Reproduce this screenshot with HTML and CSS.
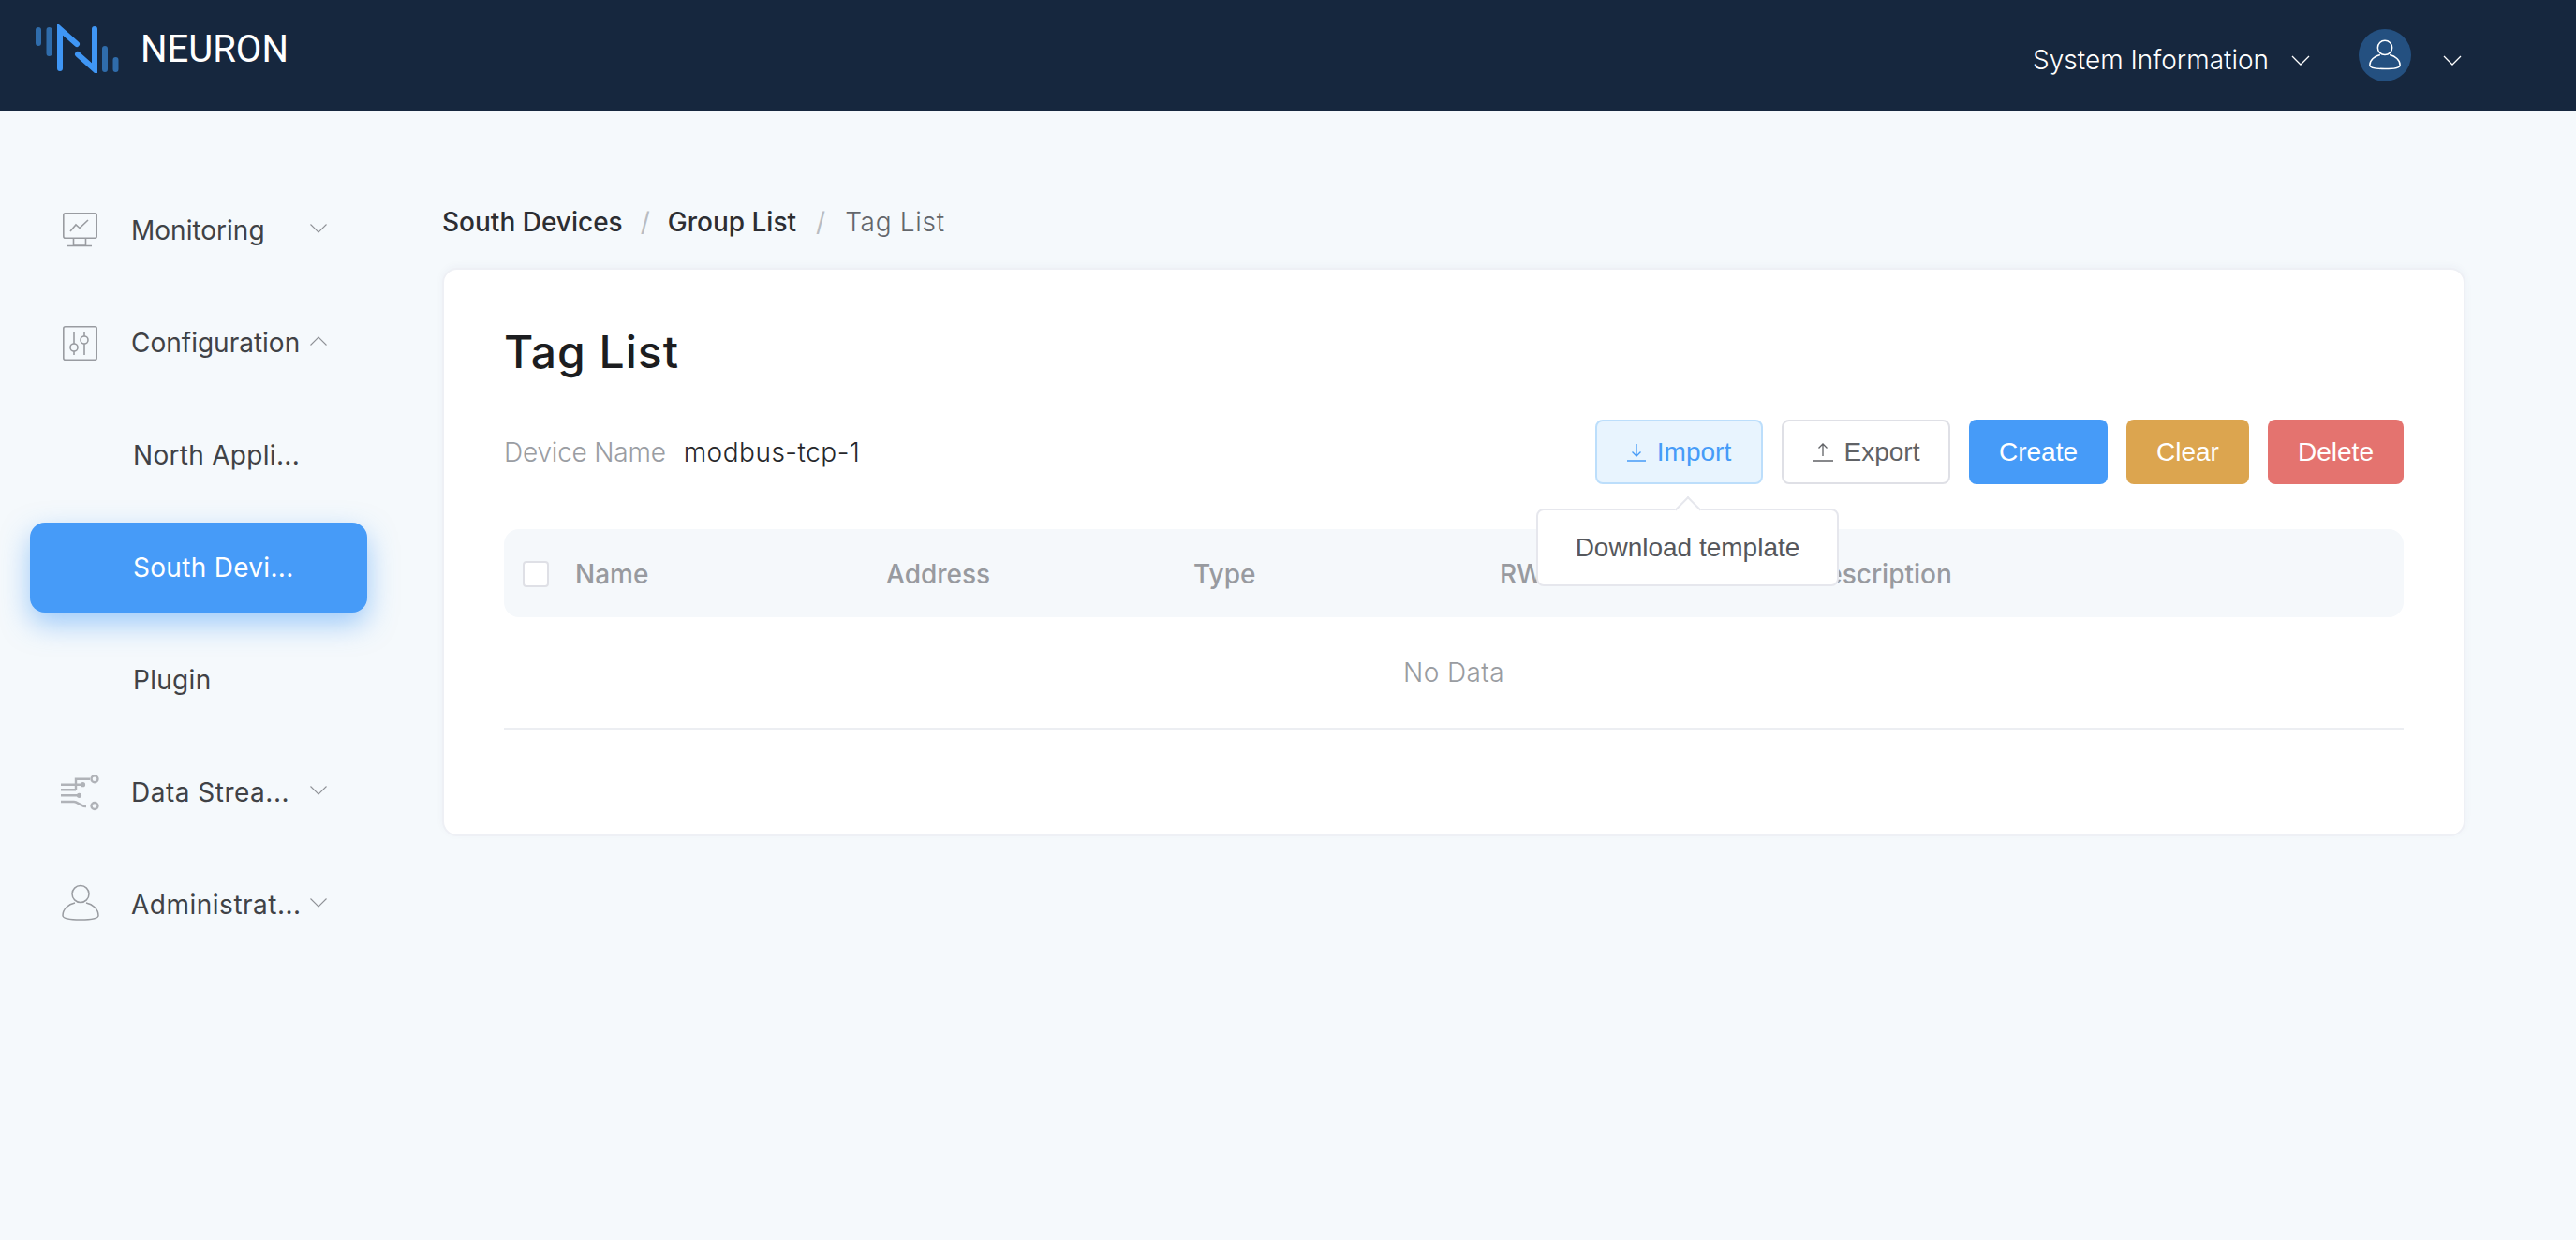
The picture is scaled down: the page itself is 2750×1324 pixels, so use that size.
FILE: index.html
```html
<!DOCTYPE html>
<html>
  <head>
    <meta charset="utf-8">
    <title>Neuron</title>
    <link rel="stylesheet" href="styles.css">
  </head>
  <body>
    <header class="header">
      <div class="brand">
        <svg class="logo" width="92" height="52" viewBox="0 0 92 52" fill="none" stroke-linecap="round">
          <g stroke="#2f6cab" stroke-width="6">
            <path d="M5 6v14M16.5 6v25M76 26v22M87.5 38v10"/>
          </g>
          <g stroke="#3f96f5" stroke-width="6">
            <path d="M28 47V5l18 16M47 32l18 16V5"/>
          </g>
        </svg>
        <span class="brand-name">NEURON</span>
      </div>
      <div class="header-right">
        <span class="sys-info">System Information</span>
        <svg class="chevron-top" width="20" height="11" viewBox="0 0 20 11" fill="none" stroke="#fff" stroke-width="1.3"><path d="M1 1l9 9 9-9"/></svg>
        <div class="avatar">
          <svg width="34" height="36" viewBox="0 0 40 40" fill="none" stroke="#fff" stroke-width="1.8">
            <circle cx="20" cy="10.5" r="9"/>
            <path d="M14 19.5C7 21 1 26 1 32.5c0 3 6 4.5 19 4.5s19-1.5 19-4.5C39 26 33 21 26 19.5"/>
          </svg>
        </div>
        <svg class="chevron-top" width="20" height="11" viewBox="0 0 20 11" fill="none" stroke="#fff" stroke-width="1.3"><path d="M1 1l9 9 9-9"/></svg>
      </div>
    </header>

    <div class="main">
      <nav class="sidebar">
        <div class="menu-item">
          <svg class="menu-icon" width="44" height="44" viewBox="0 0 44 44" fill="none" stroke="#999ca1" stroke-width="1.6">
            <rect x="4.800" y="3.800" width="35.400" height="26.400" rx="2"/>
            <path d="M12 23l6-7 4 3.500 9-8.500M15.500 30v8h13v-8M8 38.500h27"/>
          </svg>
          <span class="menu-text">Monitoring</span>
          <svg class="arrow" width="18" height="10" viewBox="0 0 18 10" fill="none" stroke="#8f9297" stroke-width="1.1"><path d="M.5.500L9 9l8.500-8.500"/></svg>
        </div>
        <div class="menu-item">
          <svg class="menu-icon" width="44" height="44" viewBox="0 0 44 44" fill="none" stroke="#999ca1" stroke-width="1.6">
            <rect x="4.800" y="4.800" width="35.400" height="35.400" rx="2"/>
            <path d="M16 11v12M16 31v4M27 11v4M27 23v12"/>
            <circle cx="16" cy="27" r="4"/>
            <circle cx="27" cy="19" r="4"/>
          </svg>
          <span class="menu-text">Configuration</span>
          <svg class="arrow" width="18" height="10" viewBox="0 0 18 10" fill="none" stroke="#8f9297" stroke-width="1.1"><path d="M.5 9.500L9 1l8.500 8.500"/></svg>
        </div>
        <div class="menu-item sub-item"><span class="menu-text">North Appli...</span></div>
        <div class="menu-item sub-item active"><span class="menu-text">South Devi...</span></div>
        <div class="menu-item sub-item"><span class="menu-text">Plugin</span></div>
        <div class="menu-item">
          <svg class="menu-icon" width="44" height="44" viewBox="0 0 44 44" fill="none" stroke="#b0b3b8" stroke-width="2.400">
            <path d="M33 7.700H18V19M2 13.700h24M2 19.300h16M2 25.300h20M2 32h14c4 0 7 5 13 5"/>
            <circle cx="38" cy="7.700" r="3.500"/>
            <circle cx="38" cy="36.500" r="3.500"/>
            <circle cx="25.500" cy="13.700" r="1.400" fill="#b0b3b8"/>
            <circle cx="21.500" cy="25.300" r="1.400" fill="#b0b3b8"/>
          </svg>
          <span class="menu-text spaced">Data Strea...</span>
          <svg class="arrow" width="18" height="10" viewBox="0 0 18 10" fill="none" stroke="#8f9297" stroke-width="1.1"><path d="M.5.500L9 9l8.500-8.500"/></svg>
        </div>
        <div class="menu-item">
          <svg class="menu-icon" width="44" height="44" viewBox="0 0 44 44" fill="none" stroke="#999ca1" stroke-width="1.500">
            <circle cx="23" cy="10.500" r="9"/>
            <path d="M17 20C10 21.500 4 26.500 4 33.500c0 3 6 4.500 19 4.500s19-1.500 19-4.500c0-7-6-12-13-13.500"/>
          </svg>
          <span class="menu-text spaced">Administrat...</span>
          <svg class="arrow" width="18" height="10" viewBox="0 0 18 10" fill="none" stroke="#8f9297" stroke-width="1.1"><path d="M.5.500L9 9l8.500-8.500"/></svg>
        </div>
      </nav>

      <section class="content">
        <div class="breadcrumb">
          <span class="crumb">South Devices</span>
          <span class="crumb-sep">/</span>
          <span class="crumb">Group List</span>
          <span class="crumb-sep crumb-sep-wide">/</span>
          <span class="crumb crumb-last">Tag List</span>
        </div>

        <div class="card">
          <h1 class="card-title">Tag List</h1>
          <div class="toolbar">
            <div class="device">
              <span class="device-label">Device Name</span>
              <span class="device-value">modbus-tcp-1</span>
            </div>
            <div class="actions">
              <div class="import-wrap">
                <button class="btn btn-import">
                  <svg width="20" height="20" viewBox="0 0 20 20" fill="none" stroke="#469bf8" stroke-width="1.300"><path d="M10 1v13M5.500 9.500L10 14l4.500-4.500M0 19h20"/></svg>
                  Import
                </button>
                <div class="popover">Download template</div>
              </div>
              <button class="btn btn-export">
                <svg width="22" height="20" viewBox="0 0 22 20" fill="none" stroke="#606266" stroke-width="1.300"><path d="M11 14V1M6.500 5.500L11 1l4.500 4.500M0 19h22"/></svg>
                Export
              </button>
              <button class="btn btn-create">Create</button>
              <button class="btn btn-clear">Clear</button>
              <button class="btn btn-delete">Delete</button>
            </div>
          </div>

          <div class="table-head">
            <span class="checkbox"></span>
            <span>Name</span>
            <span>Address</span>
            <span>Type</span>
            <span>RW</span>
            <span>Description</span>
          </div>
          <div class="table-empty">No Data</div>
        </div>
      </section>
    </div>
  </body>
</html>
```

FILE: styles.css
```css
* {
  box-sizing: border-box;
}
html, body {
  margin: 0;
  height: 100%;
}
body {
  background: #f5f9fc;
  font-family: "Inter", "Noto Sans", sans-serif;
  font-size: 28px;
  color: #404246;
}
.header {
  height: 118px;
  background: #16273e;
  display: flex;
  justify-content: space-between;
  align-items: center;
  padding: 0 122px 0 36px;
}
.brand {
  display: flex;
  align-items: flex-start;
  height: 118px;
  padding-top: 26px;
}
.brand-name {
  font-family: "Roboto", sans-serif;
  font-size: 40px;
  line-height: 54px;
  color: #fff;
  margin-left: 22px;
}
.header-right {
  display: flex;
  align-items: center;
  color: #fff;
}
.sys-info {
  font-size: 28px;
  font-weight: 300;
  margin: 10px 24px 0 0;
}
.chevron-top {
  margin-top: 10px;
}
.avatar {
  width: 56px;
  height: 56px;
  border-radius: 50%;
  background: #245080;
  display: flex;
  align-items: center;
  justify-content: center;
  margin: 0 34px 0 52px;
}
.main {
  display: flex;
}
.sidebar {
  width: 472px;
  flex: none;
  padding: 80px 0 0 32px;
}
.menu-item {
  width: 360px;
  height: 96px;
  margin-bottom: 24px;
  display: flex;
  align-items: center;
  padding: 0 43px 0 31px;
  border-radius: 16px;
}
.menu-icon {
  flex: none;
  margin-right: 33px;
}
.menu-text {
  flex: 1;
  min-width: 0;
  white-space: nowrap;
}
.spaced {
  letter-spacing: 0.5px;
}
.arrow {
  flex: none;
  margin-top: -4px;
}
.sub-item {
  padding-left: 110px;
}
.sub-item .menu-text {
  letter-spacing: 0.3px;
}
.active {
  background: #469bf8;
  color: #fff;
  box-shadow: 0 12px 30px rgba(70, 155, 248, 0.5);
}
.content {
  flex: 1;
  padding: 99px 118px 0 0;
  min-width: 0;
}
.breadcrumb {
  display: flex;
  align-items: center;
  height: 40px;
  margin-bottom: 29px;
}
.crumb {
  color: #2c2e33;
  font-weight: 500;
}
.crumb-last {
  color: #63666b;
  font-weight: 300;
  letter-spacing: 0.7px;
}
.crumb-sep {
  color: #b9bcc1;
  margin: 0 19px;
}
.crumb-sep-wide {
  margin: 0 21px;
}
.card {
  background: #fff;
  border: 2px solid #eef0f5;
  border-radius: 16px;
  box-shadow: 0 -2px 8px rgba(40, 60, 90, 0.04);
  padding: 52px 64px 112px;
}
.card-title {
  margin: 0 0 36px;
  font-size: 48px;
  font-weight: 500;
  line-height: 72px;
  letter-spacing: 1px;
  color: #1c1d20;
}
.toolbar {
  display: flex;
  justify-content: space-between;
  align-items: center;
  height: 69px;
  margin-bottom: 48px;
}
.device-label {
  color: #9a9da3;
  font-weight: 300;
  letter-spacing: -0.2px;
  margin-right: 11px;
}
.device-value {
  color: #26272b;
  font-weight: 300;
  letter-spacing: 0.5px;
}
.actions {
  display: flex;
  gap: 20px;
}
.import-wrap {
  position: relative;
}
.btn {
  height: 69px;
  border: 2px solid transparent;
  border-radius: 8px;
  font-family: "Liberation Sans", sans-serif;
  font-size: 28px;
  display: flex;
  align-items: center;
  justify-content: center;
  gap: 12px;
  padding: 0;
  color: #fff;
}
.btn-import {
  width: 179px;
  background: #e8f4fe;
  border-color: #bcdefb;
  color: #469bf8;
}
.btn-export {
  width: 180px;
  background: #fff;
  border-color: #dfe0e6;
  color: #606266;
}
.btn-create {
  width: 148px;
  background: #469bf8;
}
.btn-clear {
  width: 131px;
  background: #dca54f;
}
.btn-delete {
  width: 145px;
  background: #e4736f;
}
.popover {
  position: absolute;
  top: 95px;
  left: -63px;
  width: 323px;
  height: 83px;
  background: #fff;
  border: 2px solid #e6e7ed;
  border-radius: 8px;
  display: flex;
  align-items: center;
  justify-content: center;
  font-family: "Liberation Sans", sans-serif;
  color: #55575c;
  z-index: 2;
}
.popover::before {
  content: "";
  position: absolute;
  top: -11px;
  left: 150px;
  width: 18px;
  height: 18px;
  background: #fff;
  border-top: 2px solid #e6e7ed;
  border-left: 2px solid #e6e7ed;
  transform: rotate(45deg);
}
.table-head {
  height: 94px;
  background: #f5f8fb;
  border-radius: 16px;
  display: grid;
  grid-template-columns: 56px 332px 328px 327px 329px 1fr;
  align-items: center;
  padding: 2px 0 0 20px;
  font-weight: 500;
  color: #989a9f;
}
.checkbox {
  width: 28px;
  height: 28px;
  background: #fff;
  border: 2px solid #dfe0e6;
  border-radius: 4px;
}
.table-empty {
  height: 120px;
  border-bottom: 2px solid #eceef2;
  display: flex;
  align-items: center;
  justify-content: center;
  color: #999ca1;
  font-weight: 300;
  letter-spacing: 0.4px;
}
```
